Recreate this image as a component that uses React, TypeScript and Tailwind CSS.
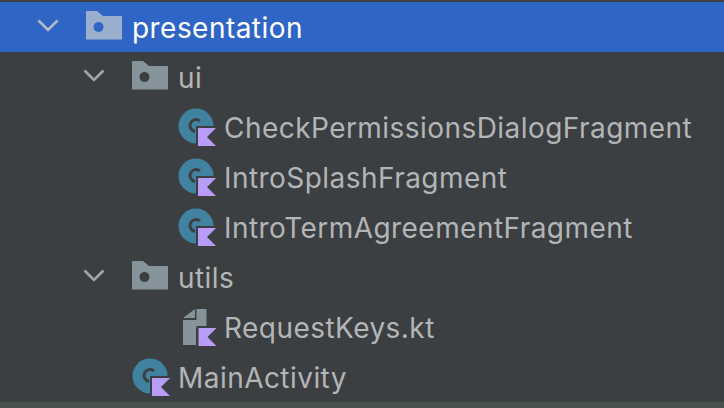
function Chevron({ light }: { light?: boolean }) {
  return (
    <svg width="24" height="16" viewBox="0 0 24 16" fill="none" className="mb-[3px] shrink-0">
      <path d="M2.5 2.5 L12 12 L21.5 2.5" stroke={light ? "#b4bac6" : "#a4a6a8"} strokeWidth="2.6" />
    </svg>
  );
}

function Folder({ selected }: { selected?: boolean }) {
  const fill = selected ? "#9aafcd" : "#87939a";
  const dot = selected ? "#2f66c5" : "#3c3f41";
  return (
    <svg width="36" height="29" viewBox="0 0 36 29" className="mb-[4px] shrink-0">
      <path d="M0 0 H11 L17 5 H36 V28.5 H0 Z" fill={fill} />
      <circle cx="12.5" cy="16" r="5" fill={dot} />
    </svg>
  );
}

function KotlinMark({ x, y }: { x: number; y: number }) {
  return (
    <g transform={`translate(${x} ${y})`}>
      <path d="M-2 -2 H20 V20 H-2 Z" fill="#3c3f41" />
      <path d="M0 0 H18 L9 9 L18 18 H0 Z" fill="#b99bf8" />
    </g>
  );
}

function ClassIcon() {
  return (
    <svg width="40" height="38" viewBox="0 0 40 38" className="shrink-0">
      <circle cx="18" cy="18" r="17.5" fill="#40829f" />
      <path d="M22 13 A6 6 0 1 0 17 23.4" fill="none" stroke="#3c3f41" strokeWidth="3" />
      <KotlinMark x={20} y={20} />
    </svg>
  );
}

function FileIcon() {
  return (
    <svg width="36" height="38" viewBox="0 0 36 38" className="shrink-0">
      <path d="M0 10 L12 1 V10 Z" fill="#87939a" />
      <path d="M13.5 1 H23.5 V20 H13 V37 H0 V12 H13.5 Z" fill="#87939a" />
      <KotlinMark x={15.5} y={20} />
    </svg>
  );
}

function Row({ indent, children, selected }: { indent: string; children: React.ReactNode; selected?: boolean }) {
  return (
    <div className={`flex h-[50px] items-center ${indent} ${selected ? "bg-[#2f66c5]" : ""}`}>{children}</div>
  );
}

const label = "pt-[2px] text-[28px] leading-none tracking-[0.45px] whitespace-nowrap text-[#b3b5b7]";

export default function App() {
  return (
    <div className="flex h-[408px] w-[724px] flex-col overflow-hidden bg-[#3c3f41] pt-[2px] font-['Inter','Liberation_Sans',sans-serif]">
      <Row indent="pl-[36px]" selected>
        <Chevron light />
        <div className="ml-[26px] flex"><Folder selected /></div>
        <span className="ml-[10px] pt-[2px] text-[28px] leading-none tracking-[0.45px] text-white">presentation</span>
      </Row>
      <Row indent="pl-[82px]">
        <Chevron />
        <div className="ml-[26px] flex"><Folder /></div>
        <span className={`ml-[10px] ${label}`}>ui</span>
      </Row>
      {["CheckPermissionsDialogFragment", "IntroSplashFragment", "IntroTermAgreementFragment"].map((name) => (
        <Row key={name} indent="pl-[178px]">
          <ClassIcon />
          <span className={`ml-[6px] ${label}`}>{name}</span>
        </Row>
      ))}
      <Row indent="pl-[82px]">
        <Chevron />
        <div className="ml-[26px] flex"><Folder /></div>
        <span className={`ml-[10px] ${label}`}>utils</span>
      </Row>
      <Row indent="pl-[183px]">
        <FileIcon />
        <span className={`ml-[5px] ${label}`}>RequestKeys.kt</span>
      </Row>
      <Row indent="pl-[132px]">
        <ClassIcon />
        <span className={`ml-[6px] ${label}`}>MainActivity</span>
      </Row>
      <div className="flex-1 bg-[#47504a]" />
    </div>
  );
}
